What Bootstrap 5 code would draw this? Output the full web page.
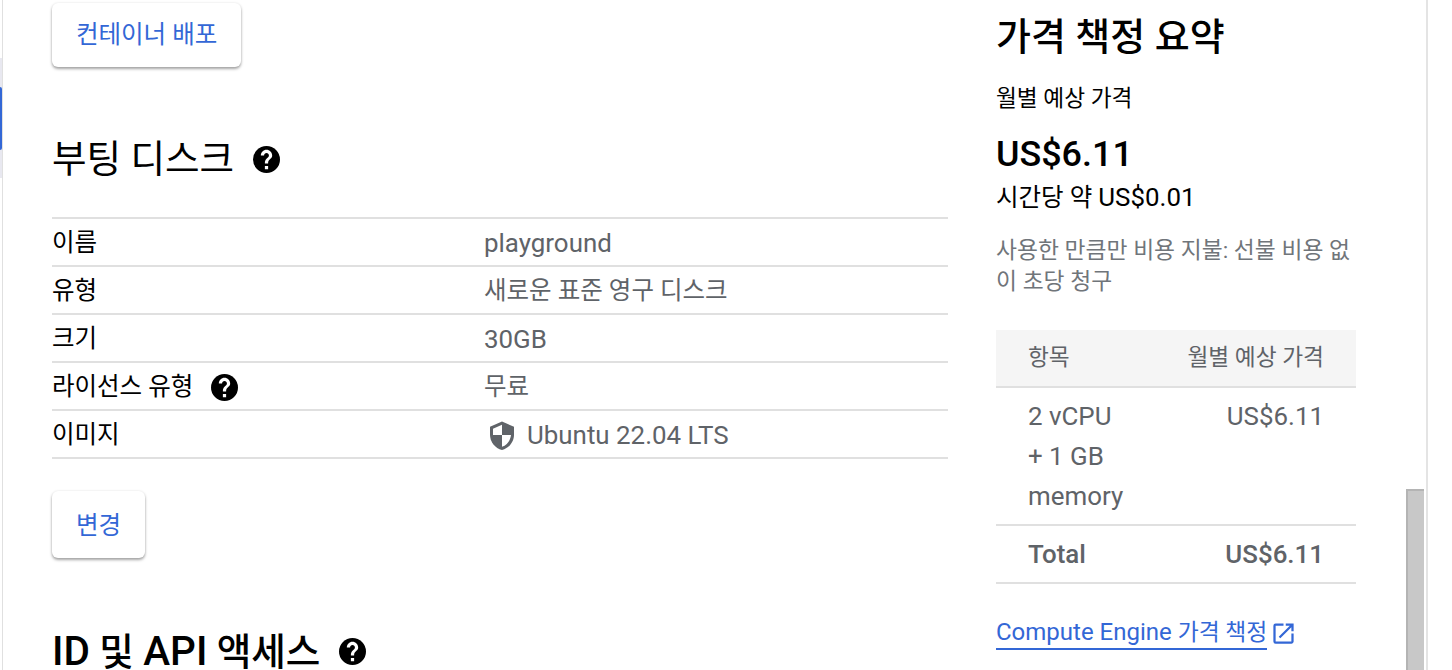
<!DOCTYPE html>
<html lang="ko">
<head>
<meta charset="utf-8">
<title>가격 책정 요약</title>
<link href="https://cdn.jsdelivr.net/npm/bootstrap@5.3.0/dist/css/bootstrap.min.css" rel="stylesheet">
<style>
html,body{height:670px;overflow:hidden;background:#fff}
body{font-family:Roboto,"Noto Sans CJK KR",sans-serif;color:#000;font-size:24.5px;line-height:1.5}
.lat{font-size:25.9px}
.shell{height:670px;width:1426px;margin-left:2px;border-right:2px solid #e4e4e4;border-left:1px solid #e0e0e0;display:flex;box-sizing:border-box}
.rail-tab{position:absolute;left:0;top:87px;width:2px;height:63px;background:#3367d6;border-radius:0 2px 2px 0}
.rail-soft{position:absolute;left:0;top:58px;width:2px;height:120px;background:#e8e8f0}
.main-pane{width:945px;padding-left:49px;flex:none}
.side-pane{width:360px;margin-left:48px;flex:none;position:relative}
.raised{display:inline-block;background:#fff;color:#3367d6;font-size:24.5px;line-height:36px;border:0;border-radius:6px;padding:14px 24px;box-shadow:0 2px 3px rgba(0,0,0,.35),0 0 3px rgba(0,0,0,.08)}
.deploy{margin-top:3px}
.sec-title{font-size:37.6px;line-height:48px;font-weight:400;margin:0;display:flex;align-items:center}
.sec-title svg{margin-left:19px}
.sec-boot{margin-top:68px;margin-bottom:34px}
.sec-id{margin-top:73px;font-weight:500;line-height:40px}
.sec-id .lat{font-size:40.5px}
.sec-id svg{margin-left:19px}
.spec{border-top:2px solid #e0e0e0;width:896px}
.spec-row{display:flex;height:48px;border-bottom:2px solid #e0e0e0;align-items:center;padding-top:2px}
.spec-k{width:432px;display:flex;align-items:center}
.spec-k svg{margin-left:18px}
.spec-v{color:#5f6368;display:flex;align-items:center}
.spec-v svg{margin-right:7px}
.change{margin-top:32px;padding:17px 24px 14px}
.side-h{font-size:38px;line-height:48px;font-weight:500;margin:13px 0 0}
.side-sub{font-size:22.7px;line-height:30px;margin-top:23px;margin-bottom:0}
.side-price{font-size:35.9px;line-height:44px;font-weight:500;margin-top:18px}
.side-hour{line-height:36px;margin-top:3px}
.side-note{font-size:22.8px;line-height:31px;color:#70757a;margin-top:19px;width:360px}
.cost{width:360px;margin-top:33px;color:#5f6368;border-collapse:collapse}
.cost th{background:#f5f5f5;font-weight:400;font-size:22.7px;height:57px;border-bottom:2px solid #e0e0e0;padding:0 32px}
.cost td{vertical-align:top;padding:8px 32px;line-height:40px;border-bottom:2px solid #e0e0e0}
.cost .end{text-align:right;white-space:nowrap}
.cost .tot td{font-weight:500}
.price-link{margin-top:33px;color:#3367d6;text-decoration:none;display:flex;align-items:center;font-size:24px;line-height:30px}
.link-text{border-bottom:2px solid #3367d6}
.link-ko{font-size:22.8px}
.price-link svg{margin-left:3px}
.thumb{position:absolute;left:1406px;top:489px;width:18px;height:181px;background:#c8c8c8;border-top:2px solid #b4b4b4;border-left:2px solid #b4b4b4}
</style>
</head>
<body>
<div class="rail-soft"></div>
<div class="rail-tab"></div>
<div class="shell">
  <div class="main-pane">
    <button class="raised deploy">컨테이너 배포</button>
    <h2 class="sec-title sec-boot">부팅 디스크
      <svg width="27" height="27" viewBox="2 2 20 20"><circle cx="12" cy="12" r="10" fill="#000"/><path d="M13.200 19.200h-2.400v-2.400h2.400zm1.900-8-.9.9c-.8.8-1 1.300-1 2.900h-2.400v-.6c0-1.100.5-2.100 1.200-2.900l1.200-1.200c.4-.4.600-.8.600-1.300 0-1-.8-1.800-1.800-1.800s-1.800.8-1.800 1.800H7.800c0-2.300 1.900-4.200 4.200-4.200s4.200 1.900 4.200 4.200c0 .9-.4 1.700-1.100 2.200z" fill="#fff"/></svg>
    </h2>
    <div class="spec">
      <div class="spec-row"><div class="spec-k">이름</div><div class="spec-v lat">playground</div></div>
      <div class="spec-row"><div class="spec-k">유형</div><div class="spec-v">새로운 표준 영구 디스크</div></div>
      <div class="spec-row"><div class="spec-k">크기</div><div class="spec-v lat">30GB</div></div>
      <div class="spec-row"><div class="spec-k">라이선스 유형
        <svg width="27" height="27" viewBox="2 2 20 20"><circle cx="12" cy="12" r="10" fill="#000"/><path d="M13.200 19.200h-2.400v-2.400h2.400zm1.900-8-.9.9c-.8.8-1 1.300-1 2.900h-2.400v-.6c0-1.100.5-2.100 1.200-2.900l1.200-1.200c.4-.4.600-.8.600-1.300 0-1-.8-1.800-1.800-1.800s-1.800.8-1.800 1.800H7.800c0-2.300 1.900-4.200 4.200-4.200s4.200 1.900 4.200 4.200c0 .9-.4 1.700-1.100 2.200z" fill="#fff"/></svg></div><div class="spec-v">무료</div></div>
      <div class="spec-row"><div class="spec-k">이미지</div><div class="spec-v lat">
        <svg width="36" height="36" viewBox="0 0 24 24"><path d="M12 3 4 6.500v5.300c0 4.700 3.400 9.100 8 10.200 4.600-1.100 8-5.500 8-10.200V6.500z" fill="#5f6368"/><path d="M12 5.200 6 7.800V12h6zM12 12v7.900c3.200-.9 5.600-4.200 6-7.900z" fill="#fff"/></svg>Ubuntu 22.04 LTS</div></div>
    </div>
    <button class="raised change">변경</button>
    <h2 class="sec-title sec-id"><span><span class="lat">ID</span> 및 <span class="lat">API</span> 액세스</span>
      <svg width="27" height="27" viewBox="2 2 20 20"><circle cx="12" cy="12" r="10" fill="#000"/><path d="M13.200 19.200h-2.400v-2.400h2.400zm1.900-8-.9.9c-.8.8-1 1.300-1 2.900h-2.400v-.6c0-1.100.5-2.100 1.200-2.900l1.200-1.200c.4-.4.600-.8.600-1.300 0-1-.8-1.800-1.800-1.800s-1.800.8-1.800 1.800H7.800c0-2.300 1.900-4.200 4.200-4.200s4.200 1.900 4.200 4.200c0 .9-.4 1.700-1.100 2.200z" fill="#fff"/></svg>
    </h2>
  </div>
  <div class="side-pane">
    <h2 class="side-h">가격 책정 요약</h2>
    <p class="side-sub">월별 예상 가격</p>
    <div class="side-price">US$6.11</div>
    <div class="side-hour">시간당 약 <span class="lat">US$0.01</span></div>
    <div class="side-note">사용한 만큼만 비용 지불: 선불 비용 없이 초당 청구</div>
    <table class="cost">
      <thead><tr><th>항목</th><th class="end">월별 예상 가격</th></tr></thead>
      <tbody class="lat">
        <tr><td>2 vCPU<br>+ 1 GB<br>memory</td><td class="end">US$6.11</td></tr>
        <tr class="tot"><td>Total</td><td class="end">US$6.11</td></tr>
      </tbody>
    </table>
    <a class="price-link" href="#"><span class="link-text">Compute Engine <span class="link-ko">가격 책정</span></span>
      <svg width="27" height="27" viewBox="0 0 24 24" fill="#3367d6"><path d="M19 19H5V5h7V3H5a2 2 0 0 0-2 2v14a2 2 0 0 0 2 2h14c1.100 0 2-.9 2-2v-7h-2v7zM14 3v2h3.590l-9.830 9.830 1.410 1.410L19 6.410V10h2V3h-7z"/></svg></a>
  </div>
</div>
<div class="thumb"></div>
</body>
</html>
